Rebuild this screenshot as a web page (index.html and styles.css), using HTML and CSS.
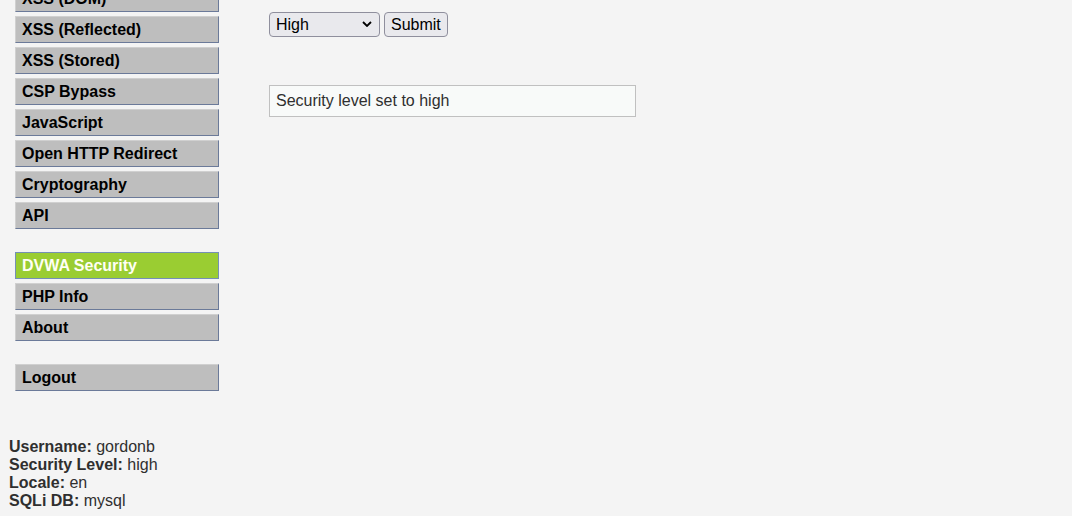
FILE: index.html
```
<!DOCTYPE html>
<html lang="en">
<head>
<meta charset="utf-8">
<title>DVWA Security</title>
<link rel="stylesheet" href="styles.css">
</head>
<body>
<div class="page">
  <aside class="sidebar">
    <nav class="menu">
      <ul class="menu-group">
        <li><a class="menu-link" href="#">XSS (DOM)</a></li>
        <li><a class="menu-link" href="#">XSS (Reflected)</a></li>
        <li><a class="menu-link" href="#">XSS (Stored)</a></li>
        <li><a class="menu-link" href="#">CSP Bypass</a></li>
        <li><a class="menu-link" href="#">JavaScript</a></li>
        <li><a class="menu-link" href="#">Open HTTP Redirect</a></li>
        <li><a class="menu-link" href="#">Cryptography</a></li>
        <li><a class="menu-link" href="#">API</a></li>
      </ul>
      <ul class="menu-group">
        <li><a class="menu-link selected" href="#" aria-current="page">DVWA Security</a></li>
        <li><a class="menu-link" href="#">PHP Info</a></li>
        <li><a class="menu-link" href="#">About</a></li>
      </ul>
      <ul class="menu-group">
        <li><a class="menu-link" href="#">Logout</a></li>
      </ul>
    </nav>
    <div class="system-info">
      <div><strong>Username:</strong> gordonb</div>
      <div><strong>Security Level:</strong> high</div>
      <div><strong>Locale:</strong> en</div>
      <div><strong>SQLi DB:</strong> mysql</div>
    </div>
  </aside>
  <main class="content">
    <form class="level-form" onsubmit="return false">
      <div class="select-box">
        <select class="control level-select" name="security" aria-label="Security level">
          <option>Low</option>
          <option>Medium</option>
          <option selected>High</option>
          <option>Impossible</option>
        </select>
        <svg class="chevron" width="10" height="6" viewBox="0 0 10 6" aria-hidden="true"><path d="M1 1l4 4 4-4" fill="none" stroke="#000" stroke-width="1.8"/></svg>
      </div>
      <button class="control" type="submit">Submit</button>
    </form>
    <div class="message" role="status">Security level set to high</div>
  </main>
</div>
</body>
</html>
```
FILE: styles.css
```
body {
  margin: 0;
  background: #f4f4f4;
  color: #2f2f2f;
  font-family: "Liberation Sans", Arial, sans-serif;
  font-size: 16px;
  line-height: 18px;
}

.page {
  display: flex;
  min-height: 100vh;
  overflow: hidden;
}

.sidebar {
  flex: none;
  width: 219px;
}

.menu {
  display: flex;
  flex-direction: column;
  gap: 23px;
  margin-top: -15px;
  padding-left: 15px;
}

.menu-group {
  display: flex;
  flex-direction: column;
  gap: 4px;
  margin: 0;
  padding: 0;
  list-style: none;
}

.menu-link {
  display: block;
  padding: 4px 6px 3px;
  border: 1px solid;
  border-color: #d0d0d0 #6b7a99 #6b7a99 #d0d0d0;
  background: #bebebe;
  color: #000;
  font-weight: bold;
  text-decoration: none;
}

.menu-link.selected {
  border-color: #7590b5;
  background: #9acd32;
  color: #fffff4;
}

.system-info {
  margin-top: 47px;
  padding-left: 9px;
}

.content {
  flex: 1;
  padding: 12px 24px 24px 50px;
}

.level-form {
  display: flex;
  gap: 4px;
}

.select-box {
  position: relative;
}

.control {
  display: block;
  height: 25px;
  padding: 0 6px;
  border: 1px solid #8f8f9d;
  border-radius: 4px;
  background: #e9e9ed;
  color: #000;
  font: inherit;
}

.level-select {
  width: 111px;
  appearance: none;
}

.chevron {
  position: absolute;
  top: 9px;
  right: 8px;
  pointer-events: none;
}

.message {
  box-sizing: border-box;
  max-width: 367px;
  margin-top: 48px;
  padding: 6px;
  border: 1px solid #c0c0c0;
  background: #f8faf9;
}
```
